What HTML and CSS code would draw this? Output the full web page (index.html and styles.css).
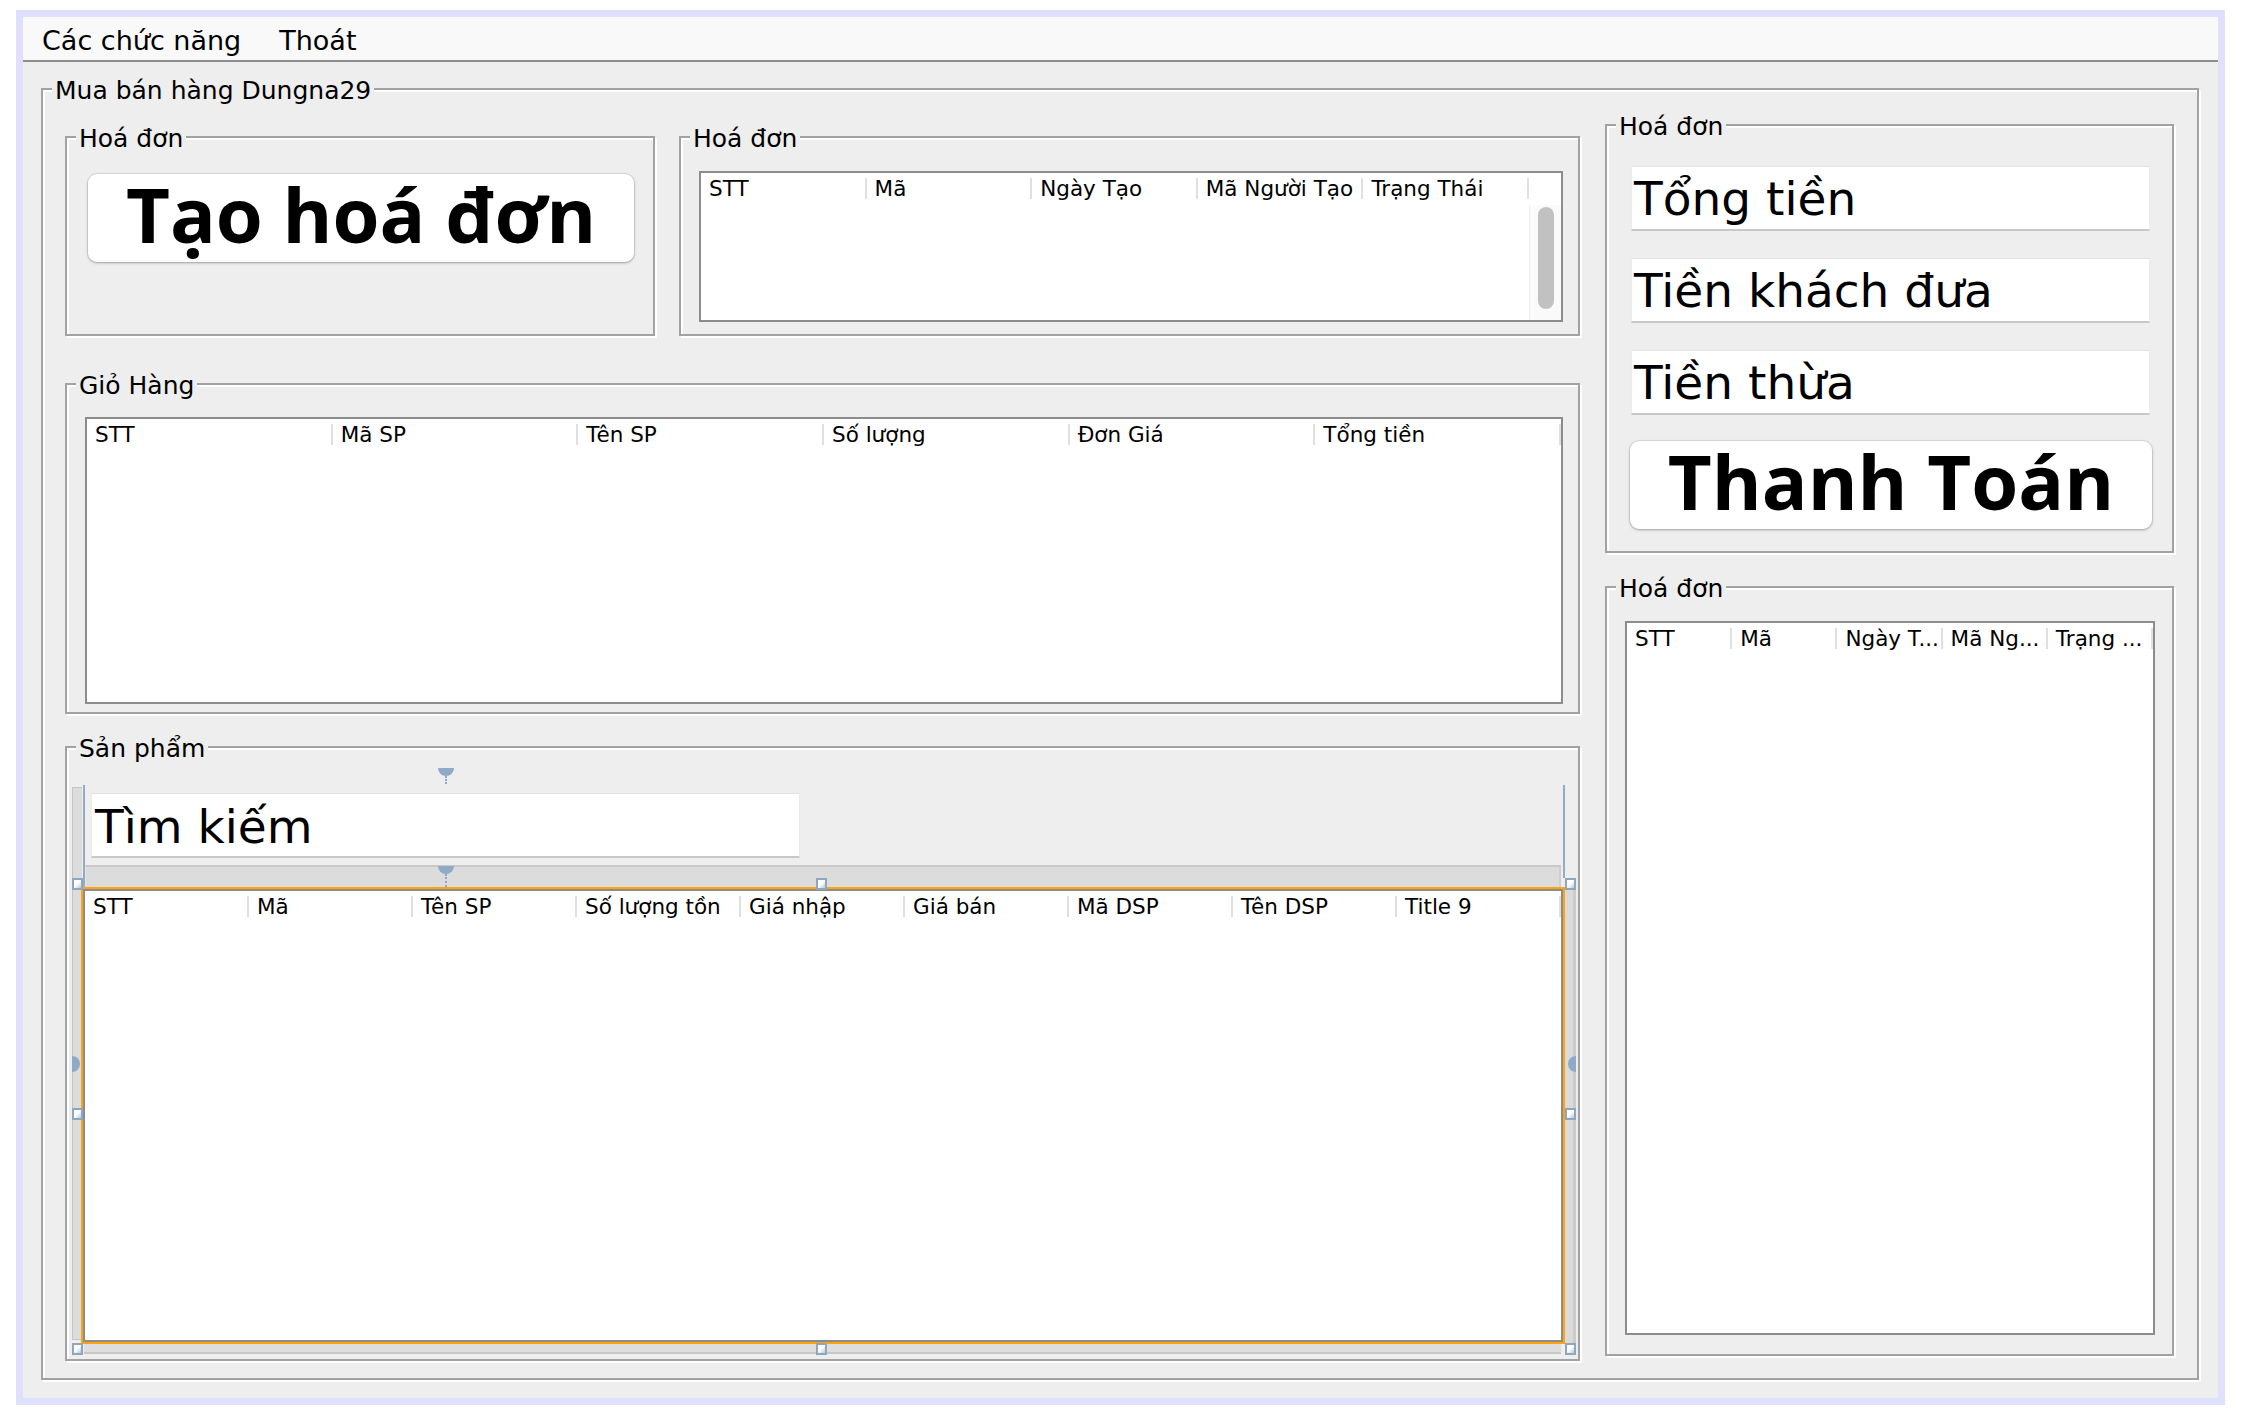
FILE: index.html
```html
<!DOCTYPE html>
<html lang="vi">
<head>
<meta charset="utf-8">
<title>Mua bán hàng Dungna29</title>
<link rel="stylesheet" href="styles.css">
</head>
<body>
<div class="frame">
  <div class="window">
    <div class="menubar">
      <span class="menu-item">Các chức năng</span>
      <span class="menu-item">Thoát</span>
    </div>
    <div class="content">
      <section class="panel outer">
        <span class="title">Mua bán hàng Dungna29</span>
        <div class="layout">
          <div class="left-col">
            <div class="row-top">
              <section class="panel p-create">
                <span class="title">Hoá đơn</span>
                <button class="big-btn">Tạo hoá đơn</button>
              </section>
              <section class="panel p-invoices">
                <span class="title">Hoá đơn</span>
                <div class="table t-invoices">
                  <div class="thead">
                    <div class="th">STT</div>
                    <div class="th">Mã</div>
                    <div class="th">Ngày Tạo</div>
                    <div class="th">Mã Người Tạo</div>
                    <div class="th">Trạng Thái</div>
                    <div class="th-fill"></div>
                  </div>
                  <div class="tbody">
                    <div class="rows"></div>
                    <div class="scroll-track"><div class="scroll-thumb"></div></div>
                  </div>
                </div>
              </section>
            </div>
            <section class="panel p-cart">
              <span class="title">Giỏ Hàng</span>
              <div class="table grow">
                <div class="thead">
                  <div class="th">STT</div>
                  <div class="th">Mã SP</div>
                  <div class="th">Tên SP</div>
                  <div class="th">Số lượng</div>
                  <div class="th">Đơn Giá</div>
                  <div class="th">Tổng tiền</div>
                </div>
              </div>
            </section>
            <section class="panel p-products">
              <span class="title">Sản phẩm</span>
              <div class="designer">
                <div class="strip-left"></div>
                <div class="strip-right"></div>
                <div class="guide guide-left"></div>
                <div class="guide guide-right"></div>
                <div class="marker-down m1"></div>
                <div class="dots-v d1"></div>
                <div class="marker-down m2"></div>
                <div class="dots-v d2"></div>
                <div class="marker-side ms-left"></div>
                <div class="marker-side ms-right"></div>
                <div class="search field">Tìm kiếm</div>
                <div class="divider"></div>
                <div class="selection">
                  <div class="table fill">
                    <div class="thead">
                      <div class="th">STT</div>
                      <div class="th">Mã</div>
                      <div class="th">Tên SP</div>
                      <div class="th">Số lượng tồn</div>
                      <div class="th">Giá nhập</div>
                      <div class="th">Giá bán</div>
                      <div class="th">Mã DSP</div>
                      <div class="th">Tên DSP</div>
                      <div class="th">Title 9</div>
                    </div>
                  </div>
                </div>
                <div class="bottom-band"></div>
                <div class="handle h-tl"></div>
                <div class="handle h-tm"></div>
                <div class="handle h-tr"></div>
                <div class="handle h-ml"></div>
                <div class="handle h-mr"></div>
                <div class="handle h-bl"></div>
                <div class="handle h-bm"></div>
                <div class="handle h-br"></div>
              </div>
            </section>
          </div>
          <div class="right-col">
            <section class="panel p-pay">
              <span class="title">Hoá đơn</span>
              <div class="field pay-field">Tổng tiền</div>
              <div class="field pay-field">Tiền khách đưa</div>
              <div class="field pay-field">Tiền thừa</div>
              <button class="big-btn pay-btn">Thanh Toán</button>
            </section>
            <section class="panel p-list">
              <span class="title">Hoá đơn</span>
              <div class="table grow">
                <div class="thead">
                  <div class="th">STT</div>
                  <div class="th">Mã</div>
                  <div class="th">Ngày T...</div>
                  <div class="th">Mã Ng...</div>
                  <div class="th">Trạng ...</div>
                </div>
              </div>
            </section>
          </div>
        </div>
      </section>
    </div>
  </div>
</div>
</body>
</html>
```
FILE: styles.css
```css
* { box-sizing: border-box; }

html, body {
  margin: 0;
  background: #ffffff;
}

body {
  padding: 10px 0 0 16px;
  font-family: "DejaVu Sans", sans-serif;
  color: #000;
}

.frame {
  width: 2209px;
  height: 1395px;
  border: 7px solid #dfe0fb;
}

.window {
  width: 100%;
  height: 100%;
  background: #eeeeee;
  display: flex;
  flex-direction: column;
}

/* menu bar */
.menubar {
  height: 45px;
  flex: none;
  background: #f9f9f9;
  border-bottom: 2px solid #8e8e8e;
  display: flex;
  align-items: flex-start;
}

.menu-item {
  font-size: 27px;
  line-height: 37px;
  padding: 5px 19px 0;
  white-space: nowrap;
}

.content {
  flex: 1;
  padding: 26px 19px 18px 18px;
  display: flex;
}

/* etched titled panels */
.panel {
  position: relative;
  border: 2px solid #a2a2a2;
  box-shadow: 2px 2px 0 #ffffff, inset 2px 2px 0 #ffffff;
}

.title {
  position: absolute;
  top: -14px;
  left: 9px;
  padding: 0 3px;
  font-size: 25px;
  line-height: 30px;
  background: #eeeeee;
  white-space: nowrap;
}

.outer {
  flex: 1;
}

.layout {
  display: grid;
  grid-template-columns: 1515px 569px;
  column-gap: 25px;
  align-items: start;
  padding: 34px 23px 0 22px;
}

.left-col {
  display: flex;
  flex-direction: column;
  padding-top: 12px;
}

.right-col {
  display: flex;
  flex-direction: column;
}

.row-top {
  display: flex;
  gap: 24px;
  height: 200px;
}

.p-create {
  width: 590px;
  padding: 36px 19px 0 21px;
}

.p-invoices {
  flex: 1;
  padding: 33px 15px 0 18px;
}

.p-cart {
  margin-top: 47px;
  height: 331px;
  padding: 32px 15px 8px 18px;
  display: flex;
  flex-direction: column;
}

.p-products {
  margin-top: 32px;
  height: 615px;
  padding: 37px 2px 4px 4px;
}

.p-pay {
  height: 429px;
  padding: 40px 22px 0 24px;
  display: flex;
  flex-direction: column;
}

.p-list {
  margin-top: 33px;
  height: 770px;
  padding: 33px 17px 19px 18px;
  display: flex;
  flex-direction: column;
}

/* buttons */
.big-btn {
  display: block;
  width: 100%;
  height: 88px;
  padding: 0 0 8px;
  border: none;
  border-radius: 9px;
  background: #ffffff;
  box-shadow: 0 0 0 1px rgba(0, 0, 0, 0.07), 0 1px 3px rgba(0, 0, 0, 0.28);
  font-family: "Open Sans", "DejaVu Sans", sans-serif;
  font-weight: 700;
  font-size: 76px;
  line-height: 80px;
  color: #000;
  white-space: nowrap;
  text-align: center;
}

.pay-btn {
  width: auto;
  margin: 0 -2px 0 -1px;
}

/* text fields */
.field {
  height: 65px;
  background: #ffffff;
  border-top: 1px solid #e2e2e2;
  border-left: 1px solid #ececec;
  border-right: 1px solid #ececec;
  border-bottom: 2px solid #c8c8c8;
  padding: 2px 0 0 2px;
  font-size: 47px;
  line-height: 60px;
  white-space: nowrap;
}

.pay-field {
  margin-bottom: 27px;
}

.pay-field:nth-of-type(3) {
  margin-bottom: 26px;
}

/* tables */
.table {
  border: 2px solid #8c8c8c;
  background: #ffffff;
  display: flex;
  flex-direction: column;
}

.grow {
  flex: 1;
}

.fill {
  height: 100%;
}

.t-invoices {
  height: 151px;
}

.thead {
  display: flex;
  height: 32px;
  flex: none;
}

.th {
  flex: 1 1 0;
  min-width: 0;
  padding-left: 8px;
  font-size: 21.5px;
  line-height: 32px;
  white-space: nowrap;
  overflow: hidden;
  background: linear-gradient(#e0e0e0, #e0e0e0) right 5px / 2px 21px no-repeat;
}

.t-invoices .th {
  flex: 0 0 165.6px;
}

.th-fill {
  flex: 1;
}

.tbody {
  flex: 1;
  display: flex;
}

.rows {
  flex: 1;
}

.scroll-track {
  width: 32px;
  background: #fafafa;
  border-left: 1px solid #efefef;
  padding: 2px 7px 0 8px;
}

.scroll-thumb {
  width: 16px;
  height: 102px;
  border-radius: 8px;
  background: #c1c1c1;
}

/* form designer area */
.designer {
  position: relative;
  height: 100%;
  padding-top: 8px;
}

.search {
  margin-left: 20px;
  width: 709px;
  padding-left: 3px;
  line-height: 61px;
  padding-top: 2px;
}

.divider {
  margin: 7px 0 0 14px;
  width: 1476px;
  height: 22px;
  background: #dcdcdc;
  border-top: 2px solid #c9c9c9;
  border-left: 1px solid #e6e6e6;
  border-right: 2px solid #cfcfcf;
}

.selection {
  position: relative;
  margin-left: 10px;
  width: 1484px;
  height: 457px;
  border: 2px solid #ffa30f;
}

.bottom-band {
  margin-left: 13px;
  width: 1477px;
  height: 10px;
  background: #dedede;
  border-bottom: 2px solid #c6c6c6;
}

.strip-left {
  position: absolute;
  left: 1px;
  top: 2px;
  width: 10px;
  height: 553px;
  background: #dcdcdc;
  border: 1px solid #c4c4c4;
  border-right: none;
}

.strip-right {
  position: absolute;
  left: 1494px;
  top: 104px;
  width: 11px;
  height: 454px;
  background: #dadada;
  border-right: 3px solid #cbcbcb;
}

.guide {
  position: absolute;
  top: 0;
  width: 2px;
  background: #93acc5;
}

.guide-left {
  left: 12px;
  height: 103px;
}

.guide-right {
  left: 1492px;
  height: 93px;
}

.marker-down {
  position: absolute;
  left: 367px;
  width: 16px;
  height: 8px;
  background: #8eaac7;
  border-radius: 0 0 8px 8px;
}

.m1 { top: -17px; }
.m2 { top: 81px; }

.dots-v {
  position: absolute;
  left: 374px;
  width: 0;
  border-left: 2px dotted #8eaac7;
}

.d1 { top: -9px; height: 8px; }
.d2 { top: 89px; height: 13px; }

.marker-side {
  position: absolute;
  top: 271px;
  width: 8px;
  height: 16px;
  background: #8eaac7;
}

.ms-left {
  left: 1px;
  border-radius: 0 8px 8px 0;
}

.ms-right {
  left: 1497px;
  border-radius: 8px 0 0 8px;
}

.handle {
  position: absolute;
  width: 11px;
  height: 12px;
  border: 2px solid #8ea7bf;
  background: linear-gradient(135deg, #ffffff 45%, #b9c8d8);
  z-index: 2;
}

.h-tl { left: 1px; top: 93px; }
.h-tm { left: 745px; top: 93px; }
.h-tr { left: 1494px; top: 93px; }
.h-ml { left: 1px; top: 323px; }
.h-mr { left: 1494px; top: 323px; }
.h-bl { left: 1px; top: 558px; }
.h-bm { left: 745px; top: 558px; }
.h-br { left: 1494px; top: 558px; }
```
